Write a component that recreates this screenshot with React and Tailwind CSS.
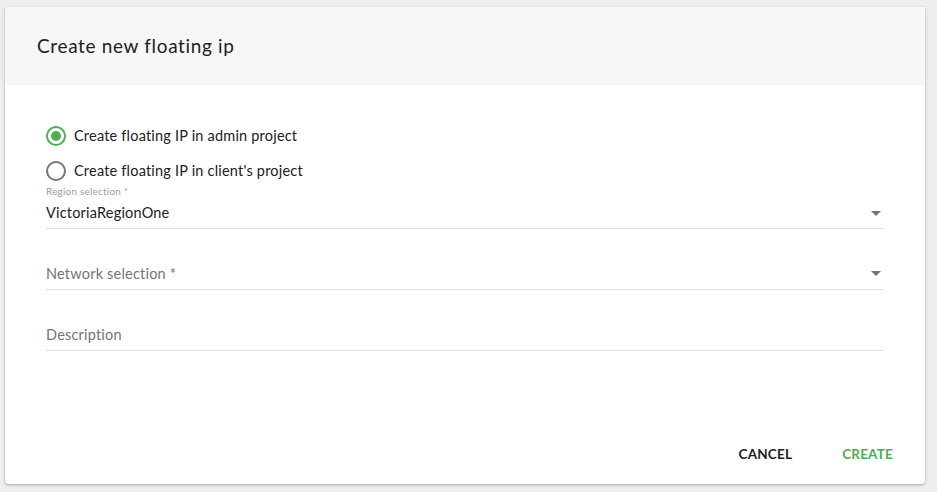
import React from 'react';

function Caret() {
  return (
    <svg width="10" height="5" viewBox="0 0 10 5" className="shrink-0">
      <path d="M0 0h10L5 5z" fill="#757575" />
    </svg>
  );
}

function Radio({ checked, label }) {
  return (
    <label className="flex items-center gap-[8px] h-[20px]">
      <span
        className={`w-[20px] h-[20px] rounded-full border-2 flex items-center justify-center ${
          checked ? 'border-[#4caf50]' : 'border-[#757575]'
        }`}
      >
        {checked && <span className="w-[10px] h-[10px] rounded-full bg-[#4caf50]" />}
      </span>
      <span className="text-[14.5px] tracking-[0.2px] text-[#212121]">{label}</span>
    </label>
  );
}

export default function App() {
  return (
    <div className="w-[937px] h-[492px] bg-[#eeeeee] pl-[5px] pt-[7px] font-['Lato',sans-serif]">
      <div className="w-[920px] h-[477px] bg-white rounded-b-[4px] shadow-[0_1px_3px_rgba(0,0,0,0.3)] flex flex-col">
        {/* Header */}
        <div className="h-[78px] bg-[#f7f7f7] flex items-center px-[32px]">
          <h2 className="text-[19px] tracking-[0.65px] text-[#212121]">Create new floating ip</h2>
        </div>

        {/* Body */}
        <div className="flex-1 px-[41px] pt-[41px]">
          <div className="flex flex-col gap-[15px]">
            <Radio checked label="Create floating IP in admin project" />
            <Radio label="Create floating IP in client's project" />
          </div>

          <div className="w-[838px] mt-[4px]">
            <div className="text-[10px] text-[#9e9e9e] leading-[12px] tracking-[0.2px]">Region selection *</div>
            <div className="flex items-center justify-between h-[32px] pr-[3px] border-b border-[#e0e0e0] pt-[1px]">
              <span className="text-[14.5px] tracking-[0.2px] text-[#212121]">VictoriaRegionOne</span>
              <Caret />
            </div>

            <div className="flex items-center justify-between h-[30px] mt-[31px] pr-[3px] border-b border-[#e0e0e0] pb-[2px]">
              <span className="text-[14.5px] tracking-[0.2px] text-[#757575]">Network selection *</span>
              <Caret />
            </div>

            <div className="flex items-center h-[30px] mt-[31px] border-b border-[#e0e0e0] pb-[2px]">
              <span className="text-[14.5px] tracking-[0.2px] text-[#757575]">Description</span>
            </div>
          </div>
        </div>

        {/* Footer */}
        <div className="flex justify-end items-center gap-[50px] pr-[32px] pb-[20px]">
          <button className="text-[13.5px] tracking-[0.2px] font-bold text-[#212121]">CANCEL</button>
          <button className="text-[13.5px] tracking-[0.2px] font-bold text-[#4caf50]">CREATE</button>
        </div>
      </div>
    </div>
  );
}
